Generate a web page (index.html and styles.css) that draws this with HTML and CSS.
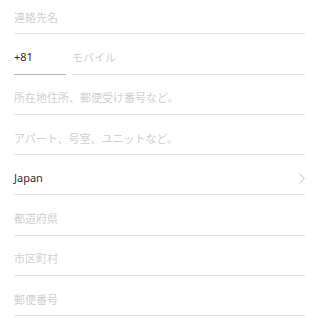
FILE: index.html
```
<!DOCTYPE html>
<html lang="ja">
<head>
<meta charset="utf-8">
<link rel="stylesheet" href="styles.css">
</head>
<body>
<div class="form">
  <div class="field"><span class="ph">連絡先名</span></div>
  <div class="phone">
    <div class="field code"><span class="val">+81</span></div>
    <div class="field mobile"><span class="ph">モバイル</span></div>
  </div>
  <div class="field"><span class="ph">所在地住所、郵便受け番号など。</span></div>
  <div class="field"><span class="ph">アパート、号室、ユニットなど。</span></div>
  <div class="field select"><span class="val">Japan</span>
    <svg class="chev" width="6" height="11" viewBox="0 0 6 11"><path d="M0.6 0.6 L5.2 5.5 L0.6 10.4" fill="none" stroke="#bdbdbd" stroke-width="1"/></svg>
  </div>
  <div class="field"><span class="ph">都道府県</span></div>
  <div class="field"><span class="ph">市区町村</span></div>
  <div class="field"><span class="ph">郵便番号</span></div>
</div>
</body>
</html>
```
FILE: styles.css
```
html, body {
  margin: 0;
  padding: 0;
  background: #ffffff;
}
body {
  font-family: "Noto Sans", "Noto Sans CJK JP", sans-serif;
  font-size: 11px;
  width: 320px;
  height: 322px;
  overflow: hidden;
}
.form {
  padding: 0 15px 0 14px;
  display: flex;
  flex-direction: column;
  gap: 6px;
}
.field {
  height: 34.3px;
  box-sizing: border-box;
  border-bottom: 1px solid #e4e4e4;
  display: flex;
  align-items: center;
  justify-content: space-between;
}
.phone {
  display: flex;
  gap: 6px;
}
.phone .field.code {
  width: 52px;
  border-bottom: 1.5px solid #b3b3b3;
}
.phone .field.mobile {
  flex: 1;
}
.ph {
  color: #d0d0d0;
}
.val {
  color: #2e2e2e;
}
.chev {
  margin-top: 1px;
}
```
